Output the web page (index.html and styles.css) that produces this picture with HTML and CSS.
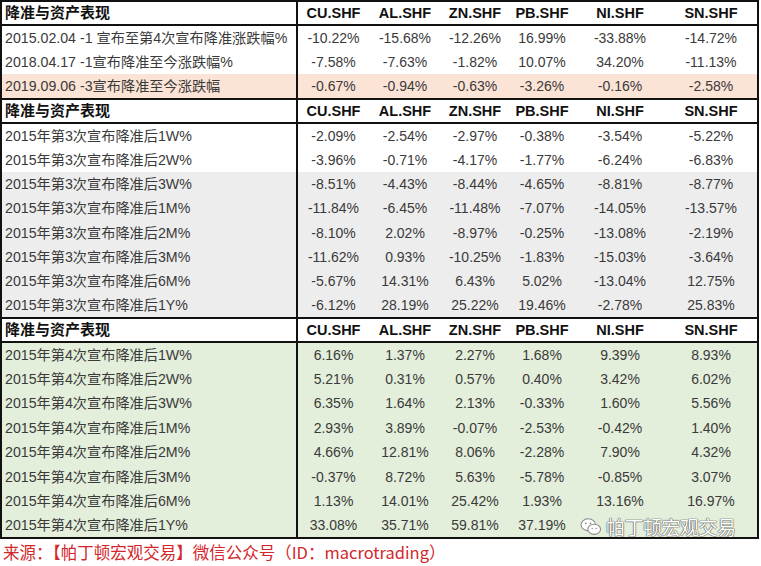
FILE: index.html
```html
<!DOCTYPE html>
<html lang="zh-CN">
<head>
<meta charset="utf-8">
<title>降准与资产表现</title>
<link rel="stylesheet" href="styles.css">
</head>
<body>
<div class="page">
  <table class="grid">
    <colgroup>
      <col class="c-label"><col class="c-cu"><col class="c-al"><col class="c-zn"><col class="c-pb"><col class="c-ni"><col class="c-sn">
    </colgroup>
    <tbody class="sec">
      <tr class="head"><th class="label">降准与资产表现</th><th>CU.SHF</th><th>AL.SHF</th><th>ZN.SHF</th><th>PB.SHF</th><th>NI.SHF</th><th>SN.SHF</th></tr>
      <tr><td class="label">2015.02.04 -1 宣布至第4次宣布降准涨跌幅%</td><td>-10.22%</td><td>-15.68%</td><td>-12.26%</td><td>16.99%</td><td>-33.88%</td><td>-14.72%</td></tr>
      <tr><td class="label">2018.04.17 -1宣布降准至今涨跌幅%</td><td>-7.58%</td><td>-7.63%</td><td>-1.82%</td><td>10.07%</td><td>34.20%</td><td>-11.13%</td></tr>
      <tr class="peach"><td class="label">2019.09.06 -3宣布降准至今涨跌幅</td><td>-0.67%</td><td>-0.94%</td><td>-0.63%</td><td>-3.26%</td><td>-0.16%</td><td>-2.58%</td></tr>
    </tbody>
    <tbody class="sec">
      <tr class="head"><th class="label">降准与资产表现</th><th>CU.SHF</th><th>AL.SHF</th><th>ZN.SHF</th><th>PB.SHF</th><th>NI.SHF</th><th>SN.SHF</th></tr>
      <tr><td class="label">2015年第3次宣布降准后1W%</td><td>-2.09%</td><td>-2.54%</td><td>-2.97%</td><td>-0.38%</td><td>-3.54%</td><td>-5.22%</td></tr>
      <tr><td class="label">2015年第3次宣布降准后2W%</td><td>-3.96%</td><td>-0.71%</td><td>-4.17%</td><td>-1.77%</td><td>-6.24%</td><td>-6.83%</td></tr>
      <tr class="grey"><td class="label">2015年第3次宣布降准后3W%</td><td>-8.51%</td><td>-4.43%</td><td>-8.44%</td><td>-4.65%</td><td>-8.81%</td><td>-8.77%</td></tr>
      <tr class="grey"><td class="label">2015年第3次宣布降准后1M%</td><td>-11.84%</td><td>-6.45%</td><td>-11.48%</td><td>-7.07%</td><td>-14.05%</td><td>-13.57%</td></tr>
      <tr class="grey"><td class="label">2015年第3次宣布降准后2M%</td><td>-8.10%</td><td>2.02%</td><td>-8.97%</td><td>-0.25%</td><td>-13.08%</td><td>-2.19%</td></tr>
      <tr class="grey"><td class="label">2015年第3次宣布降准后3M%</td><td>-11.62%</td><td>0.93%</td><td>-10.25%</td><td>-1.83%</td><td>-15.03%</td><td>-3.64%</td></tr>
      <tr class="grey"><td class="label">2015年第3次宣布降准后6M%</td><td>-5.67%</td><td>14.31%</td><td>6.43%</td><td>5.02%</td><td>-13.04%</td><td>12.75%</td></tr>
      <tr class="grey"><td class="label">2015年第3次宣布降准后1Y%</td><td>-6.12%</td><td>28.19%</td><td>25.22%</td><td>19.46%</td><td>-2.78%</td><td>25.83%</td></tr>
    </tbody>
    <tbody class="sec green">
      <tr class="head"><th class="label">降准与资产表现</th><th>CU.SHF</th><th>AL.SHF</th><th>ZN.SHF</th><th>PB.SHF</th><th>NI.SHF</th><th>SN.SHF</th></tr>
      <tr><td class="label">2015年第4次宣布降准后1W%</td><td>6.16%</td><td>1.37%</td><td>2.27%</td><td>1.68%</td><td>9.39%</td><td>8.93%</td></tr>
      <tr><td class="label">2015年第4次宣布降准后2W%</td><td>5.21%</td><td>0.31%</td><td>0.57%</td><td>0.40%</td><td>3.42%</td><td>6.02%</td></tr>
      <tr><td class="label">2015年第4次宣布降准后3W%</td><td>6.35%</td><td>1.64%</td><td>2.13%</td><td>-0.33%</td><td>1.60%</td><td>5.56%</td></tr>
      <tr><td class="label">2015年第4次宣布降准后1M%</td><td>2.93%</td><td>3.89%</td><td>-0.07%</td><td>-2.53%</td><td>-0.42%</td><td>1.40%</td></tr>
      <tr><td class="label">2015年第4次宣布降准后2M%</td><td>4.66%</td><td>12.81%</td><td>8.06%</td><td>-2.28%</td><td>7.90%</td><td>4.32%</td></tr>
      <tr><td class="label">2015年第4次宣布降准后3M%</td><td>-0.37%</td><td>8.72%</td><td>5.63%</td><td>-5.78%</td><td>-0.85%</td><td>3.07%</td></tr>
      <tr><td class="label">2015年第4次宣布降准后6M%</td><td>1.13%</td><td>14.01%</td><td>25.42%</td><td>1.93%</td><td>13.16%</td><td>16.97%</td></tr>
      <tr><td class="label">2015年第4次宣布降准后1Y%</td><td>33.08%</td><td>35.71%</td><td>59.81%</td><td>37.19%</td><td></td><td></td></tr>
    </tbody>
  </table>
  <p class="source">来源：【帕丁顿宏观交易】微信公众号（ID：macrotrading）</p>
  <div class="watermark">
    <svg class="wm-icon" viewBox="0 0 24 22" width="22" height="20" aria-hidden="true">
      <ellipse cx="9" cy="8.5" rx="8" ry="6.5" fill="#ffffff" stroke="#8a8a8a" stroke-width="1.2"/>
      <ellipse cx="15.5" cy="13.5" rx="7" ry="5.6" fill="#ffffff" stroke="#8a8a8a" stroke-width="1.2"/>
      <circle cx="6.3" cy="7" r="1" fill="#8a8a8a"/>
      <circle cx="11.5" cy="7" r="1" fill="#8a8a8a"/>
      <circle cx="13.3" cy="12.6" r="0.8" fill="#8a8a8a"/>
      <circle cx="17.7" cy="12.6" r="0.8" fill="#8a8a8a"/>
    </svg>
    <span class="wm-text">帕丁顿宏观交易</span>
  </div>
</div>
</body>
</html>
```

FILE: styles.css
```css
html, body {
  margin: 0;
  padding: 0;
  background: #ffffff;
}

.page {
  position: relative;
  width: 761px;
  height: 566px;
  overflow: hidden;
  font-family: "Liberation Sans", "Noto Sans CJK SC", sans-serif;
}

.grid {
  border-collapse: collapse;
  table-layout: fixed;
  width: 759px;
  margin: 0;
  border: 2px solid #111;
}

.c-label { width: 296px; }
.c-cu { width: 72px; }
.c-al { width: 72px; }
.c-zn { width: 68px; }
.c-pb { width: 66px; }
.c-ni { width: 90px; }
.c-sn { width: 93px; }

.grid tr {
  height: 24.4px;
}

.grid th,
.grid td {
  padding: 0;
  text-align: center;
  vertical-align: middle;
  white-space: nowrap;
  overflow: hidden;
  line-height: 20px;
}

.grid td {
  font-size: 14px;
  color: #3a3a3a;
}

.grid th {
  font-size: 14.5px;
  font-weight: bold;
  color: #111;
  background: #ffffff;
}

.grid .label {
  text-align: left;
  padding-left: 3px;
  border-right: 2px solid #111;
}

.grid td.label {
  font-size: 14.2px;
}

.grid th.label {
  font-size: 15px;
}

.head th {
  border-top: 2px solid #111;
  border-bottom: 2px solid #111;
}

.peach td { background: #fbe3d6; }
.grey td { background: #ededed; }
.green td { background: #e3eedb; }

.source {
  margin: 0;
  padding: 2px 0 0 3px;
  font-size: 16.5px;
  line-height: 22px;
  color: #d3272b;
  font-family: "Noto Sans CJK SC", sans-serif;
}

.watermark {
  position: absolute;
  left: 580px;
  top: 515px;
  display: flex;
  align-items: center;
  gap: 4px;
}

.wm-icon {
  display: block;
}

.wm-text {
  font-family: "Noto Sans CJK SC", sans-serif;
  font-size: 19px;
  line-height: 24px;
  color: #ffffff;
  letter-spacing: -0.5px;
  text-shadow: 0 0 1px #555, 0 0 1px #555, 0 0 1px #555;
}
```
